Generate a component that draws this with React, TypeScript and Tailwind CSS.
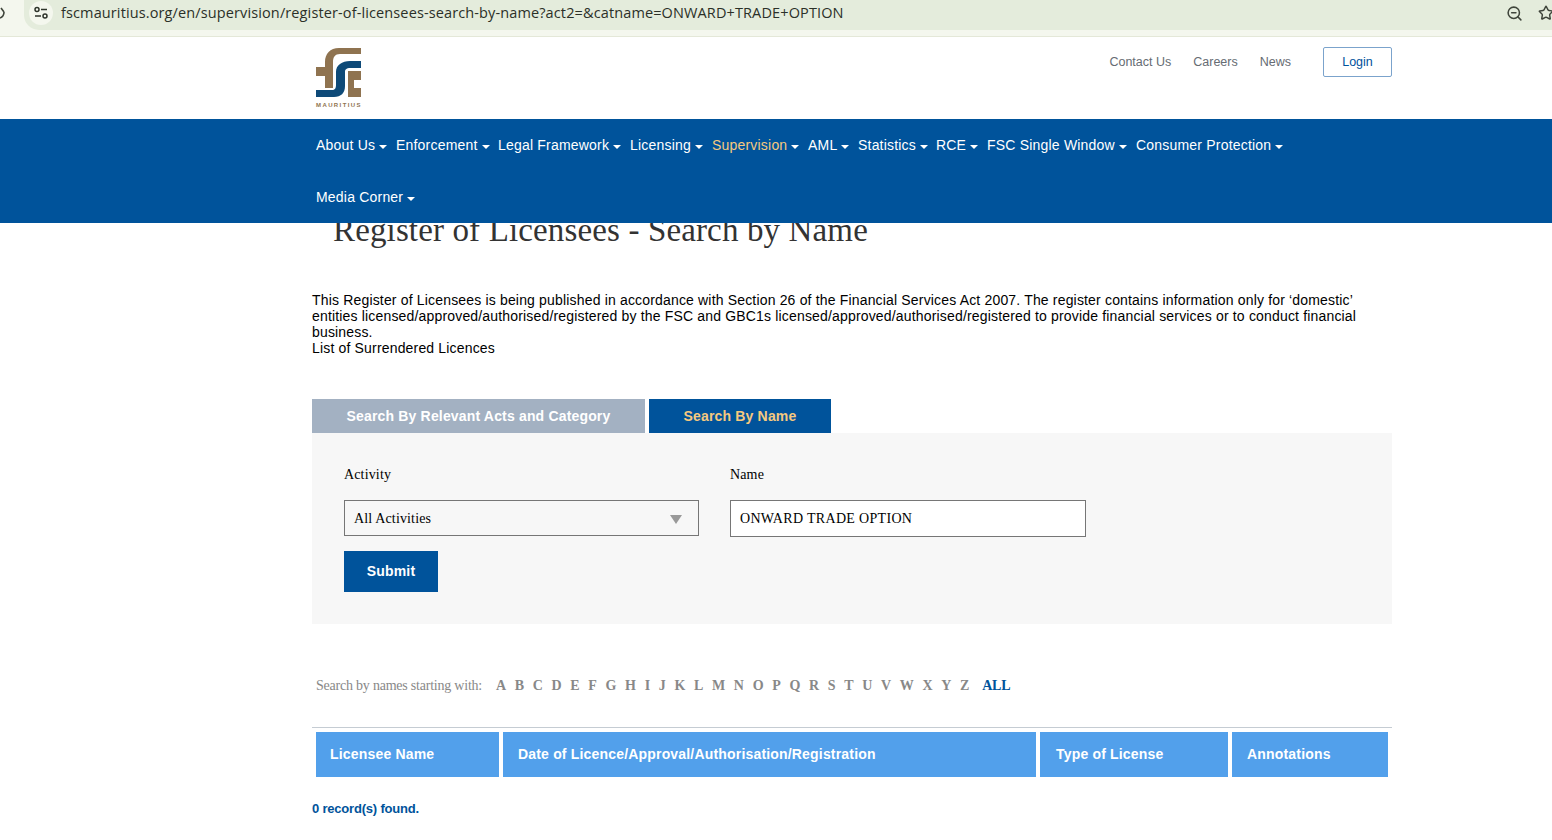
import { Star, ZoomOut } from "lucide-react";

const navRow = [
  { label: "About Us", w: "w-[80px]" },
  { label: "Enforcement", w: "w-[102px]" },
  { label: "Legal Framework", w: "w-[132px]" },
  { label: "Licensing", w: "w-[82px]" },
  { label: "Supervision", w: "w-[96px]", active: true },
  { label: "AML", w: "w-[50px]" },
  { label: "Statistics", w: "w-[78px]" },
  { label: "RCE", w: "w-[51px]" },
  { label: "FSC Single Window", w: "w-[149px]" },
  { label: "Consumer Protection", w: "w-[160px]" },
];

const letters = "ABCDEFGHIJKLMNOPQRSTUVWXYZ".split("");

const Caret = () => (
  <span className="ml-[4px] inline-block h-0 w-0 translate-y-[1px] border-x-[4px] border-t-[4px] border-x-transparent border-t-white align-middle" />
);

const FscLogo = () => (
  <svg width="45" height="50" viewBox="0 0 45 50" className="block">
    <path
      d="M45 0H23C14 0 9 6 9 14V19H0V28H9V40H17V14C17 9 19 6 24 6H45Z"
      fill="#8f7350"
    />
    <path
      d="M45 13H34C26 13 20 17 20 24V37C20 40 19 42 16 42H0V49H18C25 49 29 45 29 38V24C29 21 31 20 34 20H45Z"
      fill="#0e4a78"
    />
    <path d="M45 23H32V49H45V40H38V32H45Z" fill="#8f7350" />
  </svg>
);

export default function App() {
  return (
    <div className="h-[840px] w-[1552px] overflow-hidden bg-white font-['Liberation_Sans',sans-serif]">
      {/* Browser bar */}
      <div className="flex h-[37px] items-start border-b border-[#e4e8d8] bg-[#f4f7ee]">
        <svg width="24" height="30" viewBox="0 0 24 30" fill="none" stroke="#3f453b" strokeWidth="1.6">
          <path d="M0 18C3 17 4 14 4 12M1 8L4 12" />
        </svg>
        <div className="flex h-[30px] flex-1 items-center overflow-hidden rounded-bl-[15px] bg-[#e4ecdc] pb-[4px] pl-[5px]">
          <div className="flex h-[24px] w-[24px] shrink-0 items-center justify-center rounded-full bg-[#f4f7ee]">
            <svg width="16" height="14" viewBox="0 0 16 14" fill="none" stroke="#2f352c" strokeWidth="1.5">
              <circle cx="4" cy="3.5" r="2" />
              <path d="M8 3.5H14M2 10H8" />
              <circle cx="12" cy="10" r="2" />
            </svg>
          </div>
          <span className="ml-[8px] w-[1449px] shrink-0 whitespace-nowrap font-['Open_Sans',sans-serif] text-[14.5px] tracking-[0.12px] text-[#2b3028]">
            fscmauritius.org/en/supervision/register-of-licensees-search-by-name?act2=&amp;catname=ONWARD+TRADE+OPTION
          </span>
          <ZoomOut size={17} strokeWidth={2.2} className="-ml-[4px] shrink-0 text-[#3f453b]" />
          <Star size={16} strokeWidth={2.2} className="ml-[15px] shrink-0 text-[#3f453b]" />
        </div>
      </div>

      {/* Top header */}
      <div className="flex h-[82px] pl-[316px] pr-[160px]">
        <div className="pt-[11px]">
          <FscLogo />
          <div className="mt-[4px] whitespace-nowrap text-[6px] font-bold leading-[6px] tracking-[1.4px] text-[#8f7350]">MAURITIUS</div>
        </div>
        <div className="ml-auto flex h-[30px] translate-y-[10px] items-center text-[12.5px] text-[#666c73]">
          <span>Contact Us</span>
          <span className="ml-[22px]">Careers</span>
          <span className="ml-[22px]">News</span>
          <button className="ml-[32px] h-[30px] w-[69px] rounded-[2px] border border-[#7ba3cc] text-[12.5px] text-[#00529c]">
            Login
          </button>
        </div>
      </div>

      {/* Main nav */}
      <div className="relative z-10 h-[104px] bg-[#00539b] pl-[316px] text-[14px] tracking-[0.2px] text-white">
        <div className="flex h-[52px] items-center">
          {navRow.map((item) => (
            <span key={item.label} className={`${item.w} whitespace-nowrap ${item.active ? "text-[#f5c97f]" : ""}`}>
              {item.label}
              <Caret />
            </span>
          ))}
        </div>
        <div className="flex h-[52px] items-center">
          <span>
            Media Corner
            <Caret />
          </span>
        </div>
      </div>

      <div className="ml-[312px] w-[1080px]">
        <h1 className="-mt-[11px] pl-[21px] font-['Liberation_Serif',serif] text-[33px] font-normal leading-[36px] tracking-[0.14px] text-[#333]">
          Register of Licensees - Search by Name
        </h1>

        <div className="mt-[44px] text-[14px] leading-[16px] tracking-[0.17px] text-black">
          <p>
            This Register of Licensees is being published in accordance with Section 26 of the Financial Services Act
            2007. The register contains information only for ‘domestic’ entities
            licensed/approved/authorised/registered by the FSC and GBC1s licensed/approved/authorised/registered to
            provide financial services or to conduct financial business.
          </p>
          <p>List of Surrendered Licences</p>
        </div>

        {/* Tabs */}
        <div className="mt-[43px] flex h-[34px] gap-[4px] text-[14px] font-bold tracking-[0.17px]">
          <div className="flex w-[333px] items-center justify-center bg-[#a3b1c2] text-white">
            Search By Relevant Acts and Category
          </div>
          <div className="flex w-[182px] items-center justify-center bg-[#00539b] text-[#f5c97f]">Search By Name</div>
        </div>

        {/* Search form */}
        <div className="h-[191px] bg-[#f7f7f7] pl-[32px] pt-[33px] font-['Liberation_Serif',serif] text-[14px] tracking-[0.15px] text-black">
          <div className="flex gap-[31px]">
            <div className="w-[355px]">
              <div className="h-[34px] leading-[18px]">Activity</div>
              <div className="flex h-[36px] items-center justify-between border border-[#767676] pl-[9px] pr-[16px]">
                <span>All Activities</span>
                <span className="h-0 w-0 translate-y-[1px] border-x-[6px] border-t-[9px] border-x-transparent border-t-[#999]" />
              </div>
            </div>
            <div className="w-[356px]">
              <div className="h-[34px] leading-[18px]">Name</div>
              <div className="flex h-[37px] items-center border border-[#767676] bg-white pl-[9px] tracking-[0.32px]">
                ONWARD TRADE OPTION
              </div>
            </div>
          </div>
          <button className="mt-[14px] h-[41px] w-[94px] bg-[#00539b] font-['Liberation_Sans',sans-serif] text-[14px] font-bold tracking-[0.2px] text-white">
            Submit
          </button>
        </div>

        {/* A-Z */}
        <div className="mt-[52px] flex h-[18px] items-center pl-[4px] font-['Liberation_Serif',serif] text-[14px] text-[#888]">
          <span className="w-[180px] tracking-[-0.22px]">Search by names starting with:</span>
          <div className="flex gap-[8.66px] font-bold">
            {letters.map((l) => (
              <span key={l}>{l}</span>
            ))}
          </div>
          <span className="ml-[13px] font-bold tracking-[-0.3px] text-[#00539b]">ALL</span>
        </div>

        {/* Table head */}
        <div className="mt-[33px] border-t border-[#c5ccd3] pt-[4px]">
          <div className="flex h-[45px] gap-[4px] px-[4px] text-[14px] font-bold tracking-[0.18px] text-white">
            <div className="flex w-[183px] items-center bg-[#52a0eb] pl-[14px]">Licensee Name</div>
            <div className="flex w-[533px] items-center bg-[#52a0eb] pl-[15px]">
              Date of Licence/Approval/Authorisation/Registration
            </div>
            <div className="flex w-[188px] items-center bg-[#52a0eb] pl-[16px]">Type of License</div>
            <div className="flex w-[156px] items-center bg-[#52a0eb] pl-[15px]">Annotations</div>
          </div>
        </div>

        <p className="mt-[24px] text-[13px] font-bold leading-[16px] tracking-[-0.2px] text-[#00539b]">0 record(s) found.</p>
      </div>
    </div>
  );
}
